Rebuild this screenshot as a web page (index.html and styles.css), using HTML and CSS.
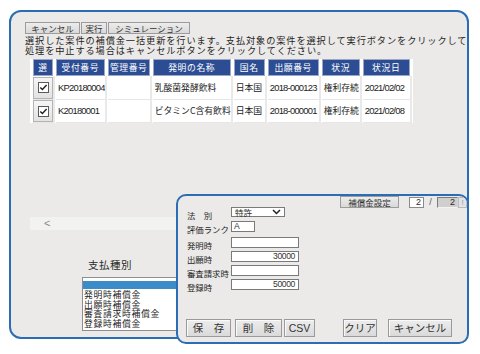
FILE: index.html
```html
<!DOCTYPE html>
<html lang="ja">
<head>
    <meta charset="UTF-8">
    <title>補償金一括更新</title>
    <link rel="stylesheet" href="styles.css">
</head>
<body>

    <div class="window">
        <div class="toolbar">
            <button class="tool-btn w-cancel">キャンセル</button>
            <button class="tool-btn w-run">実行</button>
            <button class="tool-btn w-sim">シミュレーション</button>
        </div>
        <p class="guide">選択した案件の補償金一括更新を行います。支払対象の案件を選択して実行ボタンをクリックして<br>処理を中止する場合はキャンセルボタンをクリックしてください。</p>

        <table class="grid">
            <colgroup>
                <col style="width:20px"><col style="width:47px"><col style="width:42px"><col style="width:78px">
                <col style="width:31px"><col style="width:51px"><col style="width:38px"><col style="width:47px">
            </colgroup>
            <thead>
                <tr>
                    <th>選</th><th>受付番号</th><th>管理番号</th><th>発明の名称</th>
                    <th>国名</th><th>出願番号</th><th>状況</th><th>状況日</th>
                </tr>
            </thead>
            <tbody>
                <tr class="row-a">
                    <td class="sel"><span class="check-frame"><svg width="11" height="11" viewBox="0 0 11 11"><rect x="0.5" y="0.5" width="10" height="10" fill="#fff" stroke="#5a5a5a"/><path d="M2.3 5.4 L4.4 7.6 L8.6 3.1" fill="none" stroke="#1e1e1e" stroke-width="1.4"/></svg></span></td>
                    <td class="num">KP20180004</td><td></td><td>乳酸菌発酵飲料</td>
                    <td>日本国</td><td class="num">2018-000123</td><td>権利存続</td><td class="num">2021/02/02</td>
                </tr>
                <tr class="row-b">
                    <td class="sel"><span class="check-frame"><svg width="11" height="11" viewBox="0 0 11 11"><rect x="0.5" y="0.5" width="10" height="10" fill="#fff" stroke="#5a5a5a"/><path d="M2.3 5.4 L4.4 7.6 L8.6 3.1" fill="none" stroke="#1e1e1e" stroke-width="1.4"/></svg></span></td>
                    <td class="num">K20180001</td><td></td><td>ビタミンC含有飲料</td>
                    <td>日本国</td><td class="num">2018-000001</td><td>権利存続</td><td class="num">2021/02/08</td>
                </tr>
            </tbody>
        </table>

        <div class="hscroll"><span class="arrow">&lt;</span></div>

        <div class="pay-type">
            <div class="pay-label">支払種別</div>
            <ul class="listbox">
                <li class="selected"></li>
                <li>発明時補償金</li>
                <li>出願時補償金</li>
                <li>審査請求時補償金</li>
                <li>登録時補償金</li>
            </ul>
        </div>
    </div>

    <!-- 補償金設定パネル（一覧の上に重なる） -->
    <div class="panel">
        <div class="panel-head">
            <button class="tool-btn w-setting">補償金設定</button>
            <span class="page-box">2</span>
            <span class="page-sep">/</span>
            <span class="page-total">2</span>
            <span class="page-more">!</span>
        </div>

        <div class="fields">
            <div class="field">
                <span class="field-label">法　別</span>
                <div class="fake-select">特許<svg width="9" height="6" viewBox="0 0 9 6"><path d="M1 1 L4.5 4.5 L8 1" fill="none" stroke="#222" stroke-width="1.5"/></svg></div>
            </div>
            <div class="field gap-more">
                <span class="field-label">評価ランク</span>
                <span class="text-box short">A</span>
            </div>
            <div class="field">
                <span class="field-label">発明時</span>
                <span class="text-box amount"></span>
            </div>
            <div class="field">
                <span class="field-label">出願時</span>
                <span class="text-box amount">30000</span>
            </div>
            <div class="field">
                <span class="field-label">審査請求時</span>
                <span class="text-box amount"></span>
            </div>
            <div class="field">
                <span class="field-label">登録時</span>
                <span class="text-box amount">50000</span>
            </div>
        </div>

        <div class="actions">
            <button class="act-btn w-save">保　存</button>
            <button class="act-btn w-del">削　除</button>
            <button class="act-btn w-csv">CSV</button>
            <button class="act-btn w-clear">クリア</button>
            <button class="act-btn w-close">キャンセル</button>
        </div>
    </div>

</body>
</html>
```

FILE: styles.css
```css
/* 補償金一括更新画面 */
body {
    margin: 0;
    background: #ffffff;
    font-family: "Liberation Sans", "Noto Sans CJK JP", sans-serif;
    color: #2a2a2a;
    width: 480px;
    height: 354px;
    overflow: hidden;
    position: relative;
}
.window {
    margin: 10px 0 0 9px;
    width: 460px;
    height: 329px;
    box-sizing: border-box;
    border: 2px solid #2a6db5;
    border-radius: 12px;
    background: #ebeae8;
    padding: 10px 0 0 14px;
    overflow: hidden;
}
.toolbar {
    display: flex;
    height: 12px;
}
.tool-btn {
    height: 12px;
    margin: 0 1px 0 0;
    padding: 0;
    box-sizing: border-box;
    border: 1px solid #9c9c9c;
    background: linear-gradient(#ececec, #d9d9d9);
    font-family: "Noto Sans CJK JP", sans-serif;
    font-size: 8.5px;
    line-height: 10px;
    color: #333;
}
.w-cancel { width: 55px; }
.w-run { width: 26px; }
.w-sim { width: 82px; }
.guide {
    margin: 1px 0 0;
    font-family: "Noto Sans CJK JP", sans-serif;
    font-size: 9.2px;
    letter-spacing: 0.9px;
    line-height: 10px;
    white-space: nowrap;
    color: #1e1e1e;
}

/* 一覧 */
.grid {
    margin: 4px 0 0 5px;
    border-collapse: separate;
    border-spacing: 3px 0;
    table-layout: fixed;
    background: #ffffff;
    font-family: "Noto Sans CJK JP", sans-serif;
}
.grid th {
    height: 17px;
    padding: 0;
    box-sizing: border-box;
    background: #2c4d93;
    border: 1px solid #9aa8c6;
    color: #ffffff;
    font-size: 8.8px;
    font-weight: normal;
    letter-spacing: 0.6px;
    line-height: 15px;
    white-space: nowrap;
    overflow: hidden;
}
.grid td {
    padding: 0 0 0 2px;
    font-size: 8.8px;
    line-height: 12px;
    color: #222;
    white-space: nowrap;
    overflow: hidden;
    border-bottom: 1px solid #e6e6e6;
    box-shadow: 2px 0 0 #e9e9e9;
}
.grid .row-a td { height: 23px; }
.grid .row-b td { height: 22px; }
.grid td.num {
    font-family: "Liberation Sans", sans-serif;
    font-size: 9.4px;
    letter-spacing: -0.75px;
}
.grid td.sel {
    padding: 0;
    text-align: center;
}
.check-frame {
    display: flex;
    align-items: center;
    justify-content: center;
    height: 22px;
    box-sizing: border-box;
    border: 1px solid #b4b4b4;
    background: linear-gradient(#f6f6f6, #e2e2e2);
}
.hscroll {
    margin: 94px 0 0 5px;
    width: 380px;
    height: 13px;
    background: #f2f2f1;
}
.hscroll .arrow {
    display: block;
    padding-left: 14px;
    font-size: 11px;
    line-height: 13px;
    color: #8a8a8a;
}

/* 支払種別 */
.pay-type {
    margin: 28px 0 0 57px;
}
.pay-label {
    margin-left: 6px;
    font-family: "Noto Sans CJK JP", sans-serif;
    font-size: 10.5px;
    line-height: 14px;
    letter-spacing: 0.5px;
    color: #2a2a2a;
}
.listbox {
    list-style: none;
    margin: 5px 0 0;
    padding: 3px 0 0;
    width: 120px;
    height: 54px;
    box-sizing: border-box;
    border: 1px solid #8e8e8e;
    background: #ffffff;
    font-family: "Noto Sans CJK JP", sans-serif;
    font-size: 8.8px;
    letter-spacing: 0.7px;
    line-height: 9.6px;
    color: #1e1e1e;
}
.listbox li { padding-left: 1px; height: 9.6px; }
.listbox li.selected {
    height: 8px;
    margin-bottom: 1px;
    background: #3c8dc7;
}

/* 補償金設定パネル */
.panel {
    position: absolute;
    left: 176px;
    top: 194px;
    width: 293px;
    height: 150px;
    box-sizing: border-box;
    border: 2px solid #2a6db5;
    border-radius: 10px;
    background: #ebeae8;
    display: flex;
    flex-direction: column;
    overflow: hidden;
}
.panel-head {
    display: flex;
    justify-content: flex-end;
    align-items: flex-start;
    height: 11px;
}
.w-setting {
    width: 59px;
    margin-right: 10px;
}
.page-box, .page-total {
    margin-top: 1px;
    height: 11px;
    box-sizing: border-box;
    font-size: 9px;
    line-height: 9px;
    text-align: right;
    padding-right: 2px;
}
.page-box {
    width: 15px;
    border: 1px solid #8a8a8a;
    background: #ffffff;
}
.page-sep {
    width: 13px;
    margin-top: 1px;
    text-align: center;
    font-size: 9px;
    line-height: 10px;
    color: #555;
}
.page-total {
    width: 21px;
    border: 1px solid #7c7c7c;
    border-right-color: #d6d6d6;
    border-bottom-color: #f4f4f4;
    background: #cfcfcf;
}
.page-more {
    width: 9px;
    margin-top: 1px;
    height: 11px;
    box-sizing: border-box;
    border: 1px solid #bbbbbb;
    background: #e3e3e3;
    font-size: 8px;
    line-height: 9px;
    text-align: center;
    color: #999;
}
.fields {
    padding-left: 9px;
}
.field {
    display: flex;
    height: 11px;
    margin-bottom: 3px;
}
.field.gap-more { margin-bottom: 5px; }
.field-label {
    width: 44px;
    padding-top: 3px;
    font-family: "Noto Sans CJK JP", sans-serif;
    font-size: 8.4px;
    line-height: 10px;
    white-space: nowrap;
    color: #1e1e1e;
}
.fake-select {
    display: flex;
    align-items: center;
    justify-content: space-between;
    width: 54px;
    height: 10px;
    box-sizing: border-box;
    border: 1px solid #7a7a7a;
    background: #ffffff;
    padding: 0 3px 0 3px;
    font-family: "Noto Sans CJK JP", sans-serif;
    font-size: 8.5px;
    line-height: 8px;
}
.text-box {
    display: block;
    height: 11px;
    box-sizing: border-box;
    border: 1px solid #7a7a7a;
    background: #ffffff;
    font-size: 8.6px;
    line-height: 9px;
    letter-spacing: -0.4px;
    color: #333;
}
.text-box.short {
    width: 24px;
    padding-left: 2px;
}
.text-box.amount {
    width: 68px;
    padding-right: 3px;
    text-align: right;
}
.actions {
    display: flex;
    margin-top: auto;
    padding: 0 0 5px 8px;
}
.act-btn {
    height: 18px;
    padding: 0;
    box-sizing: border-box;
    border: 1px solid #9a9a9a;
    box-shadow: inset 1px 1px 0 #fafafa;
    background: linear-gradient(#ededed, #dadada);
    font-family: "Liberation Sans", "Noto Sans CJK JP", sans-serif;
    font-size: 10.5px;
    line-height: 16px;
    color: #333;
}
.w-save { width: 45px; margin-right: 4px; }
.w-del { width: 47px; margin-right: 2px; }
.w-csv { width: 31px; margin-right: 28px; }
.w-clear { width: 34px; margin-right: 11px; }
.w-close { width: 64px; }
```
